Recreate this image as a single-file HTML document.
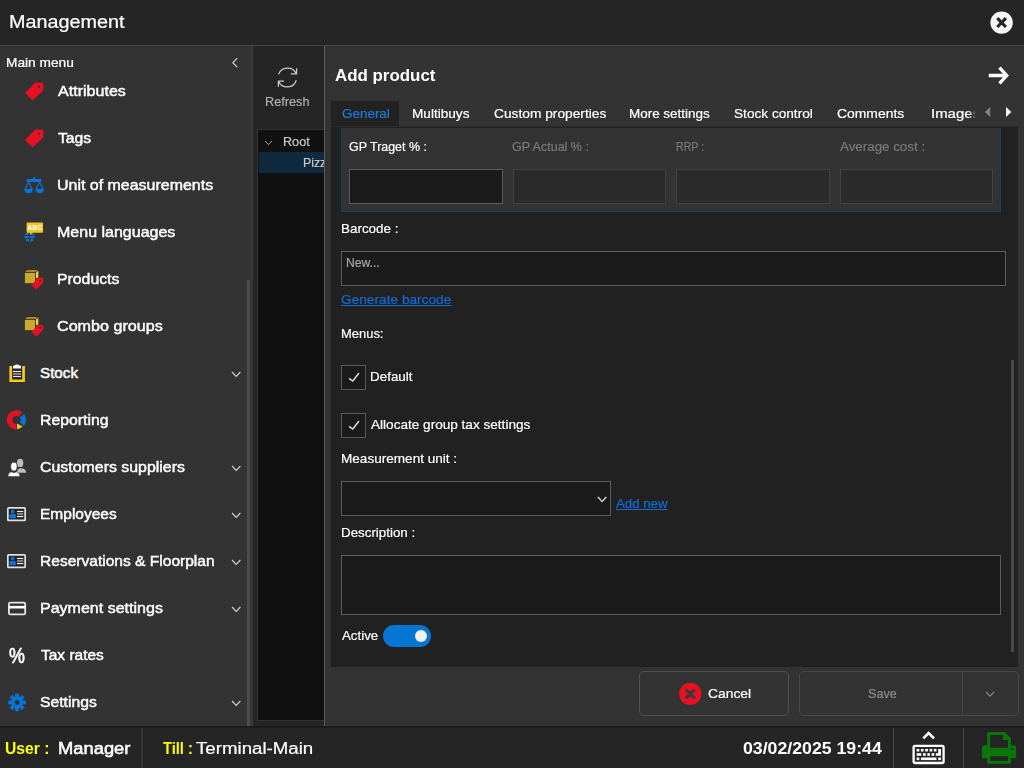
<!DOCTYPE html>
<html lang="en"><head><meta charset="utf-8"><title>Management - Add product</title>
<style>
*{box-sizing:border-box;margin:0;padding:0}
html,body{width:1024px;height:768px;overflow:hidden;background:#333;}
body{font-family:'Liberation Sans',sans-serif;color:#fff;position:relative}
.t{position:absolute;white-space:pre;line-height:normal;font-family:'Liberation Sans',sans-serif;transform-origin:0 0}
.abs{position:absolute}
#app{position:absolute;left:0;top:0;width:1024px;height:768px;overflow:hidden;background:#333}
#titlebar{position:absolute;left:0;top:0;width:1024px;height:46px;background:#252525;border-bottom:1px solid #454545}
#sidebar{position:absolute;left:0;top:46px;width:253px;height:680px;background:#333}
#sbthumb{position:absolute;left:247px;top:234px;width:3px;height:446px;background:#4e4e4e}
#sbtrack{position:absolute;left:251px;top:0;width:2px;height:680px;background:#393939}
#mid{position:absolute;left:253px;top:46px;width:71px;height:680px;background:#252525;overflow:hidden}
#tree{position:absolute;left:4px;top:83px;width:80px;height:592px;background:#111;border:1px solid #313331;overflow:hidden}
#tree .sel{position:absolute;left:1px;top:22px;width:80px;height:21px;background:#0f2a3e}
#right{position:absolute;left:324px;top:46px;width:700px;height:680px;background:#333;border-left:1px solid #595c59}
#tabsel{position:absolute;left:6px;top:55px;width:68px;height:25px;background:#222}
#content{position:absolute;left:6px;top:81px;width:687px;height:540px;background:#212121;overflow:hidden}
#tabshadow{position:absolute;left:6px;top:80px;width:687px;height:1px;background:rgba(0,0,0,.13)}
#gp{position:absolute;left:10px;top:1px;width:660px;height:84px;background:#333;border:1px solid #15435f;border-top:none}
.inp{position:absolute;height:35px;background:#1b1b1b;border:1px solid #5c5c5c}
.inp.dis{background:#2b2b2b;border-color:#424242}
.chk{position:absolute;width:25px;height:25px;background:#1b1b1b;border:1px solid #585858}
#toggle{position:absolute;left:52px;top:497.5px;width:48px;height:22px;border-radius:11px;background:#0675d3}
#toggle i{position:absolute;left:32px;top:5px;width:12px;height:12px;border-radius:50%;background:#f0f0f0}
#cscroll{position:absolute;left:680px;top:233px;width:3px;height:292px;background:#4a4a4a}
.btn{position:absolute;top:625px;height:45px;border:1px solid #505050;border-radius:5px;background:#333}
#bottombar{position:absolute;left:0;top:726px;width:1024px;height:42px;background:#252525;border-top:2px solid #1b1b1b}
.vdiv{position:absolute;top:0px;width:2px;height:40px;background:#383838}
svg{position:absolute;overflow:visible}
</style></head>
<body><div id="app">
<div id="titlebar"></div>
<span class="t" style="left:9.3px;top:12px;font-size:17.5px;color:#fff;-webkit-text-stroke:0.2px #fff;transform:scaleX(1.131);">Management</span>
<svg style="left:990px;top:11px" width="23" height="23" viewBox="0 0 23 23"><circle cx="11.6" cy="11.6" r="11.2" fill="#f6f6f6"/><path d="M7.3 7.2 L15.9 16 M15.9 7.2 L7.3 16" stroke="#252525" stroke-width="3.1" fill="none"/></svg>

<div id="sidebar"><div id="sbtrack"></div><div id="sbthumb"></div></div>
<svg style="left:24px;top:82px" width="20" height="19" viewBox="0 0 20 19"><path d="M1.4 11.1 L11.2 0.9 L19 0.9 L19 8.4 L8.6 18.1 Z" fill="#e81123" stroke="#e81123" stroke-width="0.6" stroke-linejoin="round"/><circle cx="15" cy="4.6" r="1.2" fill="#333"/></svg><svg style="left:24px;top:129px" width="20" height="19" viewBox="0 0 20 19"><path d="M1.4 11.1 L11.2 0.9 L19 0.9 L19 8.4 L8.6 18.1 Z" fill="#e81123" stroke="#e81123" stroke-width="0.6" stroke-linejoin="round"/><circle cx="15" cy="4.6" r="1.2" fill="#333"/></svg><svg style="left:24px;top:176px" width="21" height="18" viewBox="0 0 21 18"><g fill="#0b73d6">
<rect x="9" y="1" width="2.2" height="3" rx="1"/>
<rect x="2.6" y="3" width="15" height="3" rx="1.3"/>
<path d="M4.6 5 L0.6 12.8 L2 12.8 L4.6 7.6 L7.2 12.8 L8.6 12.8 Z"/>
<path d="M15.6 5 L11.6 12.8 L13 12.8 L15.6 7.6 L18.2 12.8 L19.6 12.8 Z"/>
<path d="M0.1 12.7 H9 A4.45 4.6 0 0 1 0.1 12.7 Z"/>
<path d="M11.1 12.7 H20.1 A4.5 4.6 0 0 1 11.1 12.7 Z"/>
</g></svg><svg style="left:24px;top:222px" width="20" height="20" viewBox="0 0 20 20">
<circle cx="5.6" cy="14.6" r="5.2" fill="#0b73d6"/>
<g stroke="#333" stroke-width="1" fill="none"><path d="M0 13.4 H11.5 M0 16.6 H11.5 M5.6 9 V20"/></g>
<path d="M3.4 0.4 H18.2 Q19 0.4 19 1.2 V9.9 Q19 10.7 18.2 10.7 H8.4 L6.3 13 L6 10.7 H3.4 Q2.6 10.7 2.6 9.9 V1.2 Q2.6 0.4 3.4 0.4 Z" fill="#f7c520"/>
<text x="11" y="7.8" font-family="Liberation Sans, sans-serif" font-size="6.6" font-weight="700" fill="#fff" text-anchor="middle" letter-spacing="0.2">ABC</text>
</svg><svg style="left:24px;top:269px" width="20" height="21" viewBox="0 0 20 21">
<path d="M1.2 2.9 L3.2 0.9 H13.6 L11.6 2.9 Z" fill="#a88a1e"/>
<rect x="0.9" y="3.9" width="10.2" height="10.3" fill="#c9a82a"/>
<path d="M12 3.6 L14.3 1.7 V8.4 L12 9.2 Z" fill="#ffd42a"/>
<path d="M7.75 16 L13.9 9.1 L19 9.1 L19 13.8 L12.1 20.4 Z" fill="#e81123" stroke="#e81123" stroke-width="0.5" stroke-linejoin="round"/>
<circle cx="16.25" cy="11.8" r="1.05" fill="#333"/>
</svg><svg style="left:24px;top:316px" width="20" height="21" viewBox="0 0 20 21">
<path d="M1.2 2.9 L3.2 0.9 H13.6 L11.6 2.9 Z" fill="#a88a1e"/>
<rect x="0.9" y="3.9" width="10.2" height="10.3" fill="#c9a82a"/>
<path d="M12 3.6 L14.3 1.7 V8.4 L12 9.2 Z" fill="#ffd42a"/>
<path d="M7.75 16 L13.9 9.1 L19 9.1 L19 13.8 L12.1 20.4 Z" fill="#e81123" stroke="#e81123" stroke-width="0.5" stroke-linejoin="round"/>
<circle cx="16.25" cy="11.8" r="1.05" fill="#333"/>
</svg><svg style="left:8px;top:364px" width="18" height="19" viewBox="0 0 18 19">
<rect x="4.2" y="3" width="9.6" height="13" fill="#222"/>
<path d="M2.75 2 V16.75 H15.55 V2" fill="none" stroke="#fbc91d" stroke-width="2.7"/>
<path d="M5 4.6 V2.6 Q5 1.6 6.4 1.5 Q9 -0.6 11.6 1.5 Q13 1.6 13 2.6 V4.6 Z" fill="#fff"/>
<rect x="5" y="6.9" width="8" height="1.2" fill="#e8e8e8"/>
<rect x="5" y="9.2" width="8" height="1.6" fill="#999"/>
<rect x="5" y="11.9" width="8" height="1.2" fill="#e8e8e8"/>
</svg><svg style="left:6px;top:409px" width="21" height="22" viewBox="0 0 21 22">
<g fill="none" stroke-width="5.4">
<path d="M 14.46 5.20 A 6.9 6.9 0 1 0 10.26 17.75" stroke="#e81123"/>
<path d="M 15.79 15.29 A 6.9 6.9 0 0 0 15.94 6.60" stroke="#0b73d6"/>
</g>
<path d="M11 14.4 L16.5 17.6 Q14 19.9 11.1 20.2 Z" fill="#f7c520"/>
</svg><svg style="left:8px;top:458px" width="19" height="19" viewBox="0 0 19 19">
<g fill="#bdbdbd"><ellipse cx="12.1" cy="4.9" rx="3.2" ry="4.2"/><path d="M9 14.8 Q9 10.6 12.1 10.2 Q13 11 14 10.2 Q18.1 10.9 18.1 14.8 Z"/></g>
<g fill="#fff" stroke="#333" stroke-width="0.7"><ellipse cx="5.9" cy="8.6" rx="3.2" ry="4.4"/></g>
<path d="M0 18.5 Q0 14.3 3.6 13.8 Q5.9 15.6 8.2 13.8 Q11.9 14.3 11.9 18.5 Z" fill="#fff" stroke="#333" stroke-width="0.5"/>
</svg><svg style="left:7px;top:507px" width="19" height="15" viewBox="0 0 19 15">
<rect x="0.85" y="0.85" width="17.3" height="12.6" rx="0.8" fill="#222" stroke="#e0e0e0" stroke-width="1.7"/>
<circle cx="5.6" cy="4.5" r="1.9" fill="#0b73d6"/>
<path d="M2.4 11.3 V8.3 Q2.4 6.9 3.8 6.9 H7.4 Q8.9 6.9 8.9 8.3 V11.3 Z" fill="#0b73d6"/>
<rect x="10" y="3.9" width="6.3" height="1.2" fill="#eee"/>
<rect x="10" y="6.2" width="6.3" height="1.6" fill="#999"/>
<rect x="10" y="8.9" width="6.3" height="1.2" fill="#eee"/>
</svg><svg style="left:7px;top:554px" width="19" height="15" viewBox="0 0 19 15">
<rect x="0.85" y="0.85" width="17.3" height="12.6" rx="0.8" fill="#222" stroke="#e0e0e0" stroke-width="1.7"/>
<circle cx="5.6" cy="4.5" r="1.9" fill="#0b73d6"/>
<path d="M2.4 11.3 V8.3 Q2.4 6.9 3.8 6.9 H7.4 Q8.9 6.9 8.9 8.3 V11.3 Z" fill="#0b73d6"/>
<rect x="10" y="3.9" width="6.3" height="1.2" fill="#eee"/>
<rect x="10" y="6.2" width="6.3" height="1.6" fill="#999"/>
<rect x="10" y="8.9" width="6.3" height="1.2" fill="#eee"/>
</svg><svg style="left:8px;top:601px" width="19" height="15" viewBox="0 0 19 15">
<rect x="0.9" y="1.7" width="16.3" height="11.6" rx="1.4" fill="none" stroke="#e6e6e6" stroke-width="1.8"/>
<rect x="0.9" y="4.9" width="16.3" height="2.6" fill="#fff"/>
</svg><svg style="left:7px;top:692px" width="21" height="21" viewBox="0 0 21 21">
<path d="M8.53 4.81 L8.54 1.94 L11.66 1.94 L11.67 4.81 L13.01 5.37 L15.05 3.35 L17.25 5.55 L15.23 7.59 L15.79 8.93 L18.66 8.94 L18.66 12.06 L15.79 12.07 L15.23 13.41 L17.25 15.45 L15.05 17.65 L13.01 15.63 L11.67 16.19 L11.66 19.06 L8.54 19.06 L8.53 16.19 L7.19 15.63 L5.15 17.65 L2.95 15.45 L4.97 13.41 L4.41 12.07 L1.54 12.06 L1.54 8.94 L4.41 8.93 L4.97 7.59 L2.95 5.55 L5.15 3.35 L7.19 5.37 Z" fill="#0b73d6" stroke="#0b73d6" stroke-width="0.7" stroke-linejoin="round"/>
<circle cx="10.1" cy="10.5" r="2.45" fill="#333"/>
</svg>
<span class="t" style="left:5.7px;top:56px;font-size:12.2px;color:#fff;-webkit-text-stroke:0.2px #fff;transform:scaleX(1.124);">Main menu</span><span class="t" style="left:57.7px;top:82px;font-size:15.2px;color:#fff;-webkit-text-stroke:0.45px #fff;transform:scaleX(1.058);">Attributes</span><span class="t" style="left:57.6px;top:129px;font-size:15.2px;color:#fff;-webkit-text-stroke:0.45px #fff;transform:scaleX(1.035);">Tags</span><span class="t" style="left:56.7px;top:176px;font-size:15.2px;color:#fff;-webkit-text-stroke:0.45px #fff;transform:scaleX(1.051);">Unit of measurements</span><span class="t" style="left:56.6px;top:223px;font-size:15.2px;color:#fff;-webkit-text-stroke:0.45px #fff;transform:scaleX(1.054);">Menu languages</span><span class="t" style="left:56.6px;top:270px;font-size:15.2px;color:#fff;-webkit-text-stroke:0.45px #fff;transform:scaleX(1.041);">Products</span><span class="t" style="left:57.0px;top:317px;font-size:15.2px;color:#fff;-webkit-text-stroke:0.45px #fff;transform:scaleX(1.061);">Combo groups</span><span class="t" style="left:40.0px;top:364px;font-size:15.2px;color:#fff;-webkit-text-stroke:0.45px #fff;">Stock</span><span class="t" style="left:39.6px;top:411px;font-size:15.2px;color:#fff;-webkit-text-stroke:0.45px #fff;transform:scaleX(1.04);">Reporting</span><span class="t" style="left:40.0px;top:458px;font-size:15.2px;color:#fff;-webkit-text-stroke:0.45px #fff;transform:scaleX(1.047);">Customers suppliers</span><span class="t" style="left:39.7px;top:505px;font-size:15.2px;color:#fff;-webkit-text-stroke:0.45px #fff;transform:scaleX(1.021);">Employees</span><span class="t" style="left:39.6px;top:552px;font-size:15.2px;color:#fff;-webkit-text-stroke:0.45px #fff;transform:scaleX(1.024);">Reservations &amp; Floorplan</span><span class="t" style="left:39.6px;top:599px;font-size:15.2px;color:#fff;-webkit-text-stroke:0.45px #fff;transform:scaleX(1.055);">Payment settings</span><span class="t" style="left:40.6px;top:646px;font-size:15.2px;color:#fff;-webkit-text-stroke:0.45px #fff;transform:scaleX(1.019);">Tax rates</span><span class="t" style="left:40.0px;top:693px;font-size:15.2px;color:#fff;-webkit-text-stroke:0.45px #fff;transform:scaleX(1.035);">Settings</span><svg style="left:230.8px;top:371.15000000000003px" width="10.4" height="6.3" viewBox="0 0 10.4 6.3"><path d="M1 1 L5.2 5.3 L9.4 1" fill="none" stroke="#d0d0d0" stroke-width="1.2"/></svg><svg style="left:230.8px;top:465.15000000000003px" width="10.4" height="6.3" viewBox="0 0 10.4 6.3"><path d="M1 1 L5.2 5.3 L9.4 1" fill="none" stroke="#d0d0d0" stroke-width="1.2"/></svg><svg style="left:230.8px;top:512.15px" width="10.4" height="6.3" viewBox="0 0 10.4 6.3"><path d="M1 1 L5.2 5.3 L9.4 1" fill="none" stroke="#d0d0d0" stroke-width="1.2"/></svg><svg style="left:230.8px;top:559.15px" width="10.4" height="6.3" viewBox="0 0 10.4 6.3"><path d="M1 1 L5.2 5.3 L9.4 1" fill="none" stroke="#d0d0d0" stroke-width="1.2"/></svg><svg style="left:230.8px;top:606.15px" width="10.4" height="6.3" viewBox="0 0 10.4 6.3"><path d="M1 1 L5.2 5.3 L9.4 1" fill="none" stroke="#d0d0d0" stroke-width="1.2"/></svg><svg style="left:230.8px;top:700.15px" width="10.4" height="6.3" viewBox="0 0 10.4 6.3"><path d="M1 1 L5.2 5.3 L9.4 1" fill="none" stroke="#d0d0d0" stroke-width="1.2"/></svg><svg style="left:231px;top:57px" width="8" height="12" viewBox="0 0 8 12"><path d="M6.3 1.2 L1.8 5.7 L6.3 10.2" fill="none" stroke="#d0d0d0" stroke-width="1.2"/></svg><span class="t" style="left:8.9px;top:643px;font-size:22px;color:#fff;-webkit-text-stroke:0.7px #fff;transform:scaleX(0.812);">%</span>

<div id="mid"><div id="tree"><div class="sel"></div></div></div>
<svg style="left:277px;top:66px" width="21" height="23" viewBox="0 0 21 23"><g fill="none" stroke="#cdcdcd" stroke-width="1.25">
<path d="M1.5 8.2 A9.6 9.6 0 0 1 19.2 7.6"/><path d="M19.6 2.3 V7.9 H13.8"/>
<path d="M19.3 14.2 A9.5 9.5 0 0 1 1.6 15.4"/><path d="M1.4 20.7 V15.1 H6.9"/></g></svg>
<span class="t" style="left:264.9px;top:94px;font-size:13.5px;color:#b0b0b0;-webkit-text-stroke:0.2px #b0b0b0;transform:scaleX(0.94);">Refresh</span>
<svg style="left:264.0px;top:139.79999999999998px" width="9" height="5.6" viewBox="0 0 9 5.6"><path d="M1 1 L4.5 4.6 L8 1" fill="none" stroke="#a8a8a8" stroke-width="1"/></svg>
<span class="t" style="left:282.5px;top:135px;font-size:12.4px;color:#c8c8c8;-webkit-text-stroke:0.2px #c8c8c8;transform:scaleX(1.019);">Root</span>
<div class="abs" style="left:258px;top:152px;width:66px;height:22px;overflow:hidden"><span class="t" style="left:44.9px;top:4px;font-size:12.4px;color:#c8c8c8;-webkit-text-stroke:0.2px #c8c8c8;transform:scaleX(0.99);">Pizza</span></div>

<div id="right">
<div id="tabsel"></div>
<div id="content">
  <div id="gp">
    <div class="inp" style="left:7px;top:41px;width:154px"></div>
    <div class="inp dis" style="left:171px;top:41px;width:153px"></div>
    <div class="inp dis" style="left:334px;top:41px;width:154px"></div>
    <div class="inp dis" style="left:498px;top:41px;width:153px"></div>
  </div>
  <div class="inp" style="left:10px;top:124px;width:665px"></div>
  <div class="chk" style="left:10px;top:238px"></div>
  <div class="chk" style="left:10px;top:286px"></div>
  <div class="inp" style="left:10px;top:354px;width:270px"></div>
  <div class="inp" style="left:10px;top:428px;width:660px;height:60px"></div>
  <div id="toggle"><i></i></div>
  <div id="cscroll"></div>
</div>
<div id="tabshadow"></div>
<div class="btn" style="left:314px;width:150px"></div>
<div class="btn" style="left:474px;width:220px;border-color:#484848"><div class="abs" style="left:162px;top:0;width:1px;height:43px;background:#484848"></div></div>
</div>

<span class="t" style="left:335.0px;top:66px;font-size:16.3px;color:#fff;font-weight:700;transform:scaleX(1.038);">Add product</span>
<svg style="left:986px;top:64px" width="26" height="23" viewBox="0 0 26 23"><path d="M2.75 11.5 H20 M13.5 3.7 L20.7 11.5 L13.5 19.3" fill="none" stroke="#fff" stroke-width="3.3" stroke-linejoin="miter"/></svg>
<span class="t" style="left:341.5px;top:106px;font-size:13.5px;color:#1c7bd8;-webkit-text-stroke:0.2px #1c7bd8;transform:scaleX(0.996);">General</span>
<span class="t" style="left:412.4px;top:106px;font-size:13.5px;color:#fff;-webkit-text-stroke:0.2px #fff;transform:scaleX(1.008);">Multibuys</span>
<span class="t" style="left:493.5px;top:106px;font-size:13.5px;color:#fff;-webkit-text-stroke:0.2px #fff;transform:scaleX(1.018);">Custom properties</span>
<span class="t" style="left:629.4px;top:106px;font-size:13.5px;color:#fff;-webkit-text-stroke:0.2px #fff;transform:scaleX(0.996);">More settings</span>
<span class="t" style="left:734.3px;top:106px;font-size:13.5px;color:#fff;-webkit-text-stroke:0.2px #fff;transform:scaleX(1.01);">Stock control</span>
<span class="t" style="left:836.7px;top:106px;font-size:13.5px;color:#fff;-webkit-text-stroke:0.2px #fff;transform:scaleX(1.03);">Comments</span>
<div class="abs" style="left:925px;top:100px;width:52px;height:26px;overflow:hidden;-webkit-mask-image:linear-gradient(to right,#000 84%,transparent 98%);mask-image:linear-gradient(to right,#000 84%,transparent 98%)"><span class="t" style="left:6.2px;top:6px;font-size:13.5px;color:#fff;-webkit-text-stroke:0.2px #fff;transform:scaleX(1.106);">Images</span></div>
<svg style="left:984px;top:106px" width="30" height="12" viewBox="0 0 30 12"><path d="M6.2 1 V11 L1 6 Z" fill="#858585"/><path d="M22 1 V11 L27.3 6 Z" fill="#fff"/></svg>

<span class="t" style="left:348.5px;top:139px;font-size:13.5px;color:#fff;-webkit-text-stroke:0.2px #fff;transform:scaleX(0.922);">GP Traget % :</span>
<span class="t" style="left:512.0px;top:139px;font-size:13.5px;color:#7a7a7a;-webkit-text-stroke:0.2px #7a7a7a;transform:scaleX(0.926);">GP Actual % :</span>
<span class="t" style="left:675.8px;top:139px;font-size:13.5px;color:#7a7a7a;-webkit-text-stroke:0.2px #7a7a7a;transform:scaleX(0.786);">RRP :</span>
<span class="t" style="left:840.1px;top:139px;font-size:13.5px;color:#7a7a7a;-webkit-text-stroke:0.2px #7a7a7a;transform:scaleX(0.989);">Average cost :</span>
<span class="t" style="left:340.6px;top:221px;font-size:13.5px;color:#fff;-webkit-text-stroke:0.2px #fff;transform:scaleX(0.994);">Barcode :</span>
<span class="t" style="left:345.7px;top:255px;font-size:13.5px;color:#a8a8a8;-webkit-text-stroke:0.2px #a8a8a8;transform:scaleX(0.898);">New...</span>
<span class="t" style="left:341.1px;top:292px;font-size:13.5px;color:#0f6bd6;-webkit-text-stroke:0.2px #0f6bd6;transform:scaleX(1.014);text-decoration:underline;text-underline-offset:1px;">Generate barcode</span>
<span class="t" style="left:340.7px;top:326px;font-size:13.5px;color:#fff;-webkit-text-stroke:0.2px #fff;transform:scaleX(0.959);">Menus:</span>
<svg style="left:347px;top:371px" width="14" height="12" viewBox="0 0 14 12"><path d="M2 7.4 L5.8 10 L12 2" fill="none" stroke="#e4e4e4" stroke-width="1.4"/></svg>
<svg style="left:347px;top:419px" width="14" height="12" viewBox="0 0 14 12"><path d="M2 7.4 L5.8 10 L12 2" fill="none" stroke="#e4e4e4" stroke-width="1.4"/></svg>
<span class="t" style="left:369.6px;top:369px;font-size:13.5px;color:#fff;-webkit-text-stroke:0.2px #fff;transform:scaleX(0.995);">Default</span>
<span class="t" style="left:370.6px;top:417px;font-size:13.5px;color:#fff;-webkit-text-stroke:0.2px #fff;transform:scaleX(1.006);">Allocate group tax settings</span>
<span class="t" style="left:340.6px;top:451px;font-size:13.5px;color:#fff;-webkit-text-stroke:0.2px #fff;transform:scaleX(1.005);">Measurement unit :</span>
<svg style="left:596.9px;top:496.0px" width="10.2" height="6.6" viewBox="0 0 10.2 6.6"><path d="M1 1 L5.1 5.6 L9.2 1" fill="none" stroke="#e0e0e0" stroke-width="1.3"/></svg>
<span class="t" style="left:616.1px;top:496px;font-size:13.3px;color:#0d6fdc;-webkit-text-stroke:0.2px #0d6fdc;transform:scaleX(0.996);text-decoration:underline;text-underline-offset:1px;">Add new</span>
<span class="t" style="left:340.6px;top:525px;font-size:13.5px;color:#fff;-webkit-text-stroke:0.2px #fff;transform:scaleX(0.989);">Description :</span>
<span class="t" style="left:341.6px;top:628px;font-size:13.5px;color:#fff;-webkit-text-stroke:0.2px #fff;transform:scaleX(0.985);">Active</span>
<svg style="left:679px;top:682px" width="23" height="24" viewBox="0 0 23 24"><circle cx="11.25" cy="11.9" r="11.1" fill="#e81123"/><path d="M6.8 7.5 L15.7 16.4 M15.7 7.5 L6.8 16.4" stroke="#3a3a3a" stroke-width="3.1" fill="none"/></svg>
<span class="t" style="left:707.5px;top:686px;font-size:13.5px;color:#fff;-webkit-text-stroke:0.2px #fff;transform:scaleX(1.026);">Cancel</span>
<span class="t" style="left:868.1px;top:686px;font-size:13.5px;color:#8c8c8c;-webkit-text-stroke:0.2px #8c8c8c;transform:scaleX(0.933);">Save</span>
<svg style="left:985.0px;top:690.5px" width="10" height="6.2" viewBox="0 0 10 6.2"><path d="M1 1 L5.0 5.2 L9 1" fill="none" stroke="#8a8a8a" stroke-width="1.1"/></svg>

<div id="bottombar"><div class="vdiv" style="left:141px"></div><div class="vdiv" style="left:893px;width:1px;background:#484848"></div><div class="vdiv" style="left:963px;width:1px;background:#484848"></div></div>
<span class="t" style="left:4.6px;top:740px;font-size:16px;color:#ffff00;font-weight:700;transform:scaleX(0.979);">User :</span>
<span class="t" style="left:58.0px;top:740px;font-size:16px;color:#fff;-webkit-text-stroke:0.5px #fff;transform:scaleX(1.147);">Manager</span>
<span class="t" style="left:162.9px;top:740px;font-size:16px;color:#ffff00;font-weight:700;transform:scaleX(0.914);">Till :</span>
<span class="t" style="left:195.5px;top:740px;font-size:16px;color:#fff;-webkit-text-stroke:0.2px #fff;transform:scaleX(1.167);">Terminal-Main</span>
<span class="t" style="left:743.4px;top:738px;font-size:17.2px;color:#fff;font-weight:700;transform:scaleX(1.03);">03/02/2025 19:44</span>
<svg style="left:912px;top:731px" width="34" height="35" viewBox="0 0 34 35">
<path d="M11.3 7.4 L16.6 2 L22 7.4" fill="none" stroke="#fff" stroke-width="2.6"/>
<rect x="1.6" y="14.9" width="30" height="17.1" rx="1.3" fill="none" stroke="#fff" stroke-width="2.3"/>
<g fill="#fff">
<rect x="4.6" y="17.9" width="2.7" height="2.6"/><rect x="8.9" y="17.9" width="2.7" height="2.6"/><rect x="13.2" y="17.9" width="2.7" height="2.6"/><rect x="17.5" y="17.9" width="2.7" height="2.6"/><rect x="21.8" y="17.9" width="2.7" height="2.6"/>
<path d="M26.2 17.9 H29 V24.8 H23.8 V22.2 H26.2 Z"/>
<rect x="4.6" y="22.2" width="4.7" height="2.6"/><rect x="11" y="22.2" width="2.7" height="2.6"/><rect x="15.3" y="22.2" width="2.7" height="2.6"/><rect x="19.6" y="22.2" width="2.7" height="2.6"/>
<rect x="4.6" y="26.5" width="2.7" height="2.6"/><rect x="8.9" y="26.5" width="15.6" height="2.6"/><rect x="26.2" y="26.5" width="2.8" height="2.6"/>
</g></svg>
<svg style="left:981px;top:731px" width="36" height="34" viewBox="0 0 36 34">
<g fill="#0a760a">
<path d="M1 17.2 Q1 14.2 4 14.2 H32.2 Q35.2 14.2 35.2 17.2 V27.2 H1 Z"/>
<path d="M6.2 17 V2.4 Q6.2 1 7.6 1 H23.6 L29.9 7.3 V17 H27 V8.9 H22 V3.9 H9.1 V17 Z"/>
<path d="M6.2 24.6 H29.9 V31.4 Q29.9 32.8 28.5 32.8 H7.6 Q6.2 32.8 6.2 31.4 Z"/>
</g>
<rect x="9.1" y="25.2" width="17.9" height="4.7" fill="#252525"/>
<rect x="9.1" y="13" width="17.9" height="3.8" fill="#252525"/><circle cx="31.2" cy="18.1" r="1.1" fill="#252525"/>
</svg>
</div></body></html>
